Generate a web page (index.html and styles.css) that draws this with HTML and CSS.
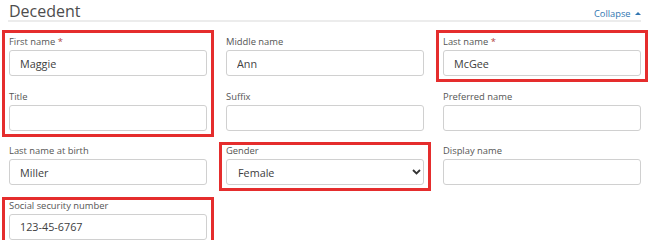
FILE: index.html
```html
<!DOCTYPE html>
<html lang="en">
<head>
<meta charset="utf-8">
<title>Decedent</title>
<link rel="stylesheet" href="styles.css">
</head>
<body>
<section class="panel">
  <header class="panel-head">
    <h2 class="panel-title">Decedent</h2>
    <a class="collapse" href="#">Collapse <span class="caret"></span></a>
  </header>
  <div class="grid">
    <div class="field hl hl-top hl-tall">
      <label class="label">First name <span class="req">*</span></label>
      <input class="input" type="text" value="Maggie">
    </div>
    <div class="field">
      <label class="label">Middle name</label>
      <input class="input" type="text" value="Ann">
    </div>
    <div class="field hl hl-top">
      <label class="label">Last name <span class="req">*</span></label>
      <input class="input" type="text" value="McGee">
    </div>

    <div class="field">
      <label class="label">Title</label>
      <input class="input" type="text" value="">
    </div>
    <div class="field">
      <label class="label">Suffix</label>
      <input class="input" type="text" value="">
    </div>
    <div class="field">
      <label class="label">Preferred name</label>
      <input class="input" type="text" value="">
    </div>

    <div class="field">
      <label class="label">Last name at birth</label>
      <input class="input" type="text" value="Miller">
    </div>
    <div class="field hl">
      <label class="label">Gender</label>
      <div class="select-wrap">
        <select class="input select">
          <option>Female</option>
          <option>Male</option>
        </select>
        <svg class="chevron" width="9" height="6" viewBox="0 0 9 6" aria-hidden="true"><path d="M1 1 L4.5 4.5 L8 1" fill="none" stroke="#333" stroke-width="1.8"/></svg>
      </div>
    </div>
    <div class="field">
      <label class="label">Display name</label>
      <input class="input" type="text" value="">
    </div>

    <div class="field hl">
      <label class="label">Social security number</label>
      <input class="input" type="text" value="123-45-6767">
    </div>
  </div>
</section>
</body>
</html>
```

FILE: styles.css
```css
body {
  margin: 0;
  background: #fff;
  font-family: "Open Sans", "Noto Sans", sans-serif;
}

.panel {
  padding: 0 9px;
}

.panel-head {
  display: flex;
  justify-content: space-between;
  align-items: baseline;
  height: 20px;
  border-bottom: 2px solid #ececec;
  margin-left: -1px;
}

.panel-title {
  margin: 0;
  padding-top: 3px;
  padding-left: 1px;
  font-size: 16px;
  line-height: 17px;
  font-weight: 400;
  color: #4d4d4d;
}

.collapse {
  font-size: 9.3px;
  color: #3276b1;
  text-decoration: none;
}

.caret {
  display: inline-block;
  width: 0;
  height: 0;
  margin-left: 2px;
  border-left: 3px solid transparent;
  border-right: 3px solid transparent;
  border-bottom: 3px solid #3276b1;
  vertical-align: 2px;
}

.grid {
  display: grid;
  grid-template-columns: repeat(3, 198px);
  column-gap: 19px;
  row-gap: 13.5px;
  margin-top: 13px;
}

.field {
  position: relative;
  display: flex;
  flex-direction: column;
}

.label {
  font-size: 9.4px;
  line-height: 13px;
  margin-bottom: 2px;
  color: #555;
}

.req {
  color: #b3473f;
}

.input {
  display: block;
  width: 100%;
  height: 26px;
  margin: 0;
  box-sizing: border-box;
  border: 1px solid #d0d0d0;
  border-radius: 3px;
  padding: 0 10px;
  font-family: "Open Sans", "Noto Sans", sans-serif;
  font-size: 10.8px;
  color: #404040;
  background: #fff;
  outline: none;
}

.select-wrap {
  position: relative;
}

.select {
  appearance: none;
  -webkit-appearance: none;
  padding-left: 11px;
}

.chevron {
  position: absolute;
  right: 3px;
  top: 10px;
  pointer-events: none;
}

.hl::after {
  content: "";
  position: absolute;
  top: -2px;
  bottom: -6px;
  left: -7.5px;
  right: -6.5px;
  border: 3px solid #e52d2d;
  pointer-events: none;
}

.hl-top::after {
  top: -5px;
}

.hl-tall::after {
  bottom: -60.5px;
}
```
